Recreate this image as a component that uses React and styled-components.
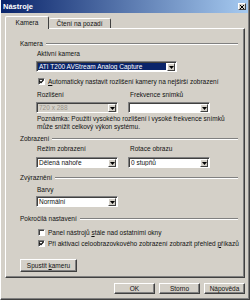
import React from 'react';
import styled, { createGlobalStyle } from 'styled-components';

const Global = createGlobalStyle`
  html, body { margin: 0; padding: 0; background: #d4d0c8; }
  body { font-family: "Liberation Sans", Arial, sans-serif; }
  * { box-sizing: border-box; }
`;

const Window = styled.div`
  width: 250px;
  height: 300px;
  background: #d4d0c8;
  border-left: 1px solid #ffffff;
  border-right: 1px solid #404040;
  border-bottom: 1px solid #404040;
  box-shadow: inset -1px -1px #808080;
  display: flex;
  flex-direction: column;
  font-size: 6.5px;
  color: #111;
`;

const TitleBar = styled.div`
  height: 13px;
  margin: 0 1px 0 0;
  background: linear-gradient(to right, #0a246a, #a6caf0);
  display: flex;
  align-items: center;
  justify-content: space-between;
  padding: 0 2px 0 2px;
`;

const Title = styled.span`
  color: #fff;
  font-weight: bold;
  font-size: 7.5px;
`;

const CloseBtn = styled.div`
  width: 8px;
  height: 7px;
  background: #d4d0c8;
  border: 1px solid;
  border-color: #fff #404040 #404040 #fff;
  display: flex;
  align-items: center;
  justify-content: center;
`;

const Body = styled.div`
  padding: 3px 0 0 4px;
  display: flex;
  flex-direction: column;
`;

const TabRow = styled.div`
  height: 12px;
  display: flex;
  align-items: flex-end;
  position: relative;
  z-index: 1;
`;

const Tab = styled.div`
  width: ${p => p.$w}px;
  height: ${p => (p.$active ? 13 : 10)}px;
  margin-bottom: ${p => (p.$active ? -1 : 0)}px;
  background: #d4d0c8;
  border-top: 1px solid #fff;
  border-left: ${p => (p.$active ? '1px solid #fff' : 'none')};
  border-right: 1px solid #404040;
  border-radius: 2px 2px 0 0;
  display: flex;
  align-items: center;
  justify-content: center;
  padding-bottom: ${p => (p.$active ? 2 : 0)}px;
`;

const Panel = styled.div`
  width: 240px;
  height: 250px;
  border: 1px solid;
  border-color: #fff #404040 #404040 #fff;
  box-shadow: inset -1px -1px #808080;
  padding: 0 6px 0 14px;
  display: flex;
  flex-direction: column;
`;

const GroupHeader = styled.div`
  margin-top: ${p => p.$mt}px;
  height: 9px;
  display: flex;
  align-items: center;
  gap: 3px;
`;

const GroupLine = styled.div`
  flex: 1;
  height: 2px;
  border-top: 1px solid #808080;
  border-bottom: 1px solid #fff;
`;

const Content = styled.div`
  padding-left: 16px;
  display: flex;
  flex-direction: column;
`;

const Label = styled.div`
  margin-top: ${p => p.$mt || 0}px;
  height: 8px;
  line-height: 8px;
  padding-left: ${p => p.$pl || 1}px;
  white-space: nowrap;
`;

const Columns = styled.div`
  margin-top: ${p => p.$mt || 0}px;
  display: grid;
  grid-template-columns: 82px 82px;
  column-gap: 10px;
`;

const SelectBox = styled.div`
  margin-top: ${p => p.$mt || 0}px;
  width: ${p => p.$w}px;
  height: 11px;
  border: 1px solid;
  border-color: #808080 #fff #fff #808080;
  box-shadow: inset 1px 1px #404040;
  background: ${p => (p.$disabled ? '#d4d0c8' : '#fff')};
  display: flex;
  padding: 1px 1px 1px 1px;
`;

const SelectValue = styled.div`
  flex: 1;
  margin-right: 1px;
  background: ${p => (p.$selected ? '#0a246a' : 'transparent')};
  color: ${p => (p.$selected ? '#fff' : p.$disabled ? '#9a968e' : '#111')};
  line-height: 8px;
  padding-left: 1px;
  white-space: nowrap;
  overflow: hidden;
`;

const ArrowBtn = styled.div`
  width: 8px;
  height: 8px;
  background: #d4d0c8;
  border: 1px solid;
  border-color: #fff #404040 #404040 #fff;
  display: flex;
  align-items: center;
  justify-content: center;
`;

const Note = styled.div`
  margin-top: ${p => p.$mt}px;
  line-height: 8px;
  padding-left: 1px;
`;

const CheckRow = styled.div`
  margin-top: ${p => p.$mt}px;
  height: 8px;
  display: flex;
  align-items: center;
  padding-left: 2px;
  gap: 3px;
  white-space: nowrap;
`;

const CheckBox = styled.div`
  width: 7px;
  height: 7px;
  background: #fff;
  border: 1px solid;
  border-color: #808080 #fff #fff #808080;
  box-shadow: inset 1px 1px #404040;
  display: flex;
  align-items: center;
  justify-content: center;
`;

const Button = styled.div`
  margin-top: ${p => p.$mt || 0}px;
  width: ${p => p.$w}px;
  height: ${p => p.$h}px;
  background: #d4d0c8;
  border: 1px solid;
  border-color: #fff #404040 #404040 #fff;
  box-shadow: inset -1px -1px #808080;
  display: flex;
  align-items: center;
  justify-content: center;
  white-space: nowrap;
`;

const ButtonRow = styled.div`
  margin-top: 5px;
  width: 240px;
  display: flex;
  justify-content: flex-end;
  gap: 4px;
`;

const U = styled.span`
  text-decoration: underline;
`;

const Arrow = () => (
  <svg width="5" height="3" viewBox="0 0 5 3">
    <path d="M0 0H5L2.5 3Z" fill="#000" />
  </svg>
);

const Select = ({ w, value, selected, disabled, mt }) => (
  <SelectBox $w={w} $disabled={disabled} $mt={mt}>
    <SelectValue $selected={selected} $disabled={disabled}>{value}</SelectValue>
    <ArrowBtn>
      <Arrow />
    </ArrowBtn>
  </SelectBox>
);

const Check = ({ checked, children, mt }) => (
  <CheckRow $mt={mt}>
    <CheckBox>
      {checked && (
        <svg width="5" height="5" viewBox="0 0 5 5">
          <path d="M0.5 2.2L2 3.7L4.5 0.8" stroke="#000" strokeWidth="1.2" fill="none" />
        </svg>
      )}
    </CheckBox>
    <span>{children}</span>
  </CheckRow>
);

export default function App() {
  return (
    <>
      <Global />
      <Window>
        <TitleBar>
          <Title>Nástroje</Title>
          <CloseBtn>
            <svg width="4" height="4" viewBox="0 0 4 4">
              <path d="M0 0L4 4M4 0L0 4" stroke="#000" strokeWidth="1" />
            </svg>
          </CloseBtn>
        </TitleBar>
        <Body>
          <TabRow>
            <Tab $active $w={44}>Kamera</Tab>
            <Tab $w={62}>Čtení na pozadí</Tab>
          </TabRow>
          <Panel>
            <GroupHeader $mt={10}>
              <span>Kamera</span>
              <GroupLine />
            </GroupHeader>
            <Content>
              <Label $mt={2}>Aktivní kamera</Label>
              <Select mt={3} w={141} value="ATI T200 AVStream Analog Capture" selected />
              <Check mt={5} checked>
                <U>A</U>utomaticky nastavit rozlišení kamery na nejširší zobrazení
              </Check>
              <Columns $mt={6}>
                <Label>Rozlišení</Label>
                <Label $pl={2}>Frekvence snímků</Label>
              </Columns>
              <Columns $mt={3}>
                <Select w={82} value="720 x 288" disabled />
                <Select w={82} value="" />
              </Columns>
              <Note $mt={2}>
                Poznámka: Použití vysokého rozlišení i vysoké frekvence snímků
                <br />
                může snížit celkový výkon systému.
              </Note>
            </Content>
            <GroupHeader $mt={3}>
              <span>Zobrazení</span>
              <GroupLine />
            </GroupHeader>
            <Content>
              <Columns $mt={2}>
                <Label>Režim zobrazení</Label>
                <Label $pl={2}>Rotace obrazu</Label>
              </Columns>
              <Columns $mt={4}>
                <Select w={82} value="Dělená nahoře" />
                <Select w={82} value="0 stupňů" />
              </Columns>
            </Content>
            <GroupHeader $mt={5}>
              <span>Zvýraznění</span>
              <GroupLine />
            </GroupHeader>
            <Content>
              <Label $mt={4}>Barvy</Label>
              <Select mt={2} w={82} value="Normální" />
            </Content>
            <GroupHeader $mt={7}>
              <span>Pokročilá nastavení</span>
              <GroupLine />
            </GroupHeader>
            <Content>
              <Check mt={5}>
                Panel nástrojů <U>s</U>tále nad ostatními okny
              </Check>
              <Check mt={3} checked>
                Při aktivaci celoobrazovkového zobrazení zobrazit přehled <U>p</U>říkazů
              </Check>
            </Content>
            <Button $mt={12} $w={57} $h={13}>
              Spustit&nbsp;<U>k</U>ameru
            </Button>
          </Panel>
          <ButtonRow>
            <Button $w={41} $h={11}>OK</Button>
            <Button $w={41} $h={11}>Storno</Button>
            <Button $w={41} $h={11}>Nápověda</Button>
          </ButtonRow>
        </Body>
      </Window>
    </>
  );
}
